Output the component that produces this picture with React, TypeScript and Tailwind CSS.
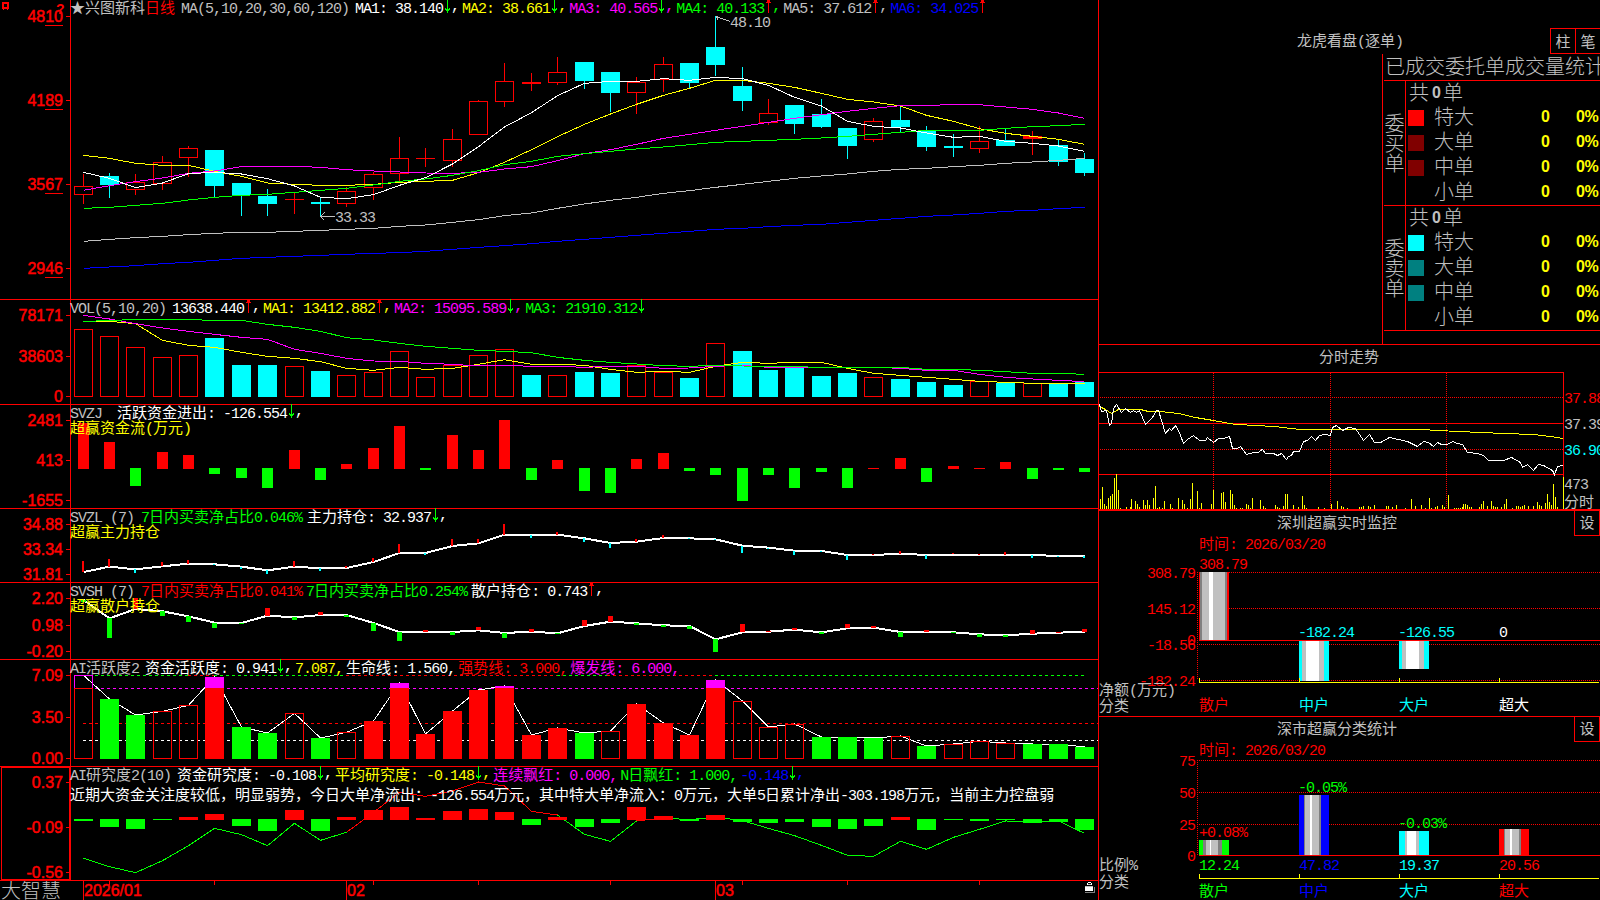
import type { ReactNode } from 'react';

const RED = '#ff0000';
const GREEN = '#00ff00';
const CYAN = '#00ffff';
const YELLOW = '#ffff00';
const MAGENTA = '#ff00ff';
const WHITE = '#ffffff';
const GRAY = '#c0c0c0';
const BLUE = '#0000ff';

const AXIS_X = 70;
const RIGHT_X = 1098;

// x of the middle pixel of every day
const days = [
  83, 109, 135, 162, 188, 214, 241, 267, 294, 320, 346, 373, 399, 425, 452, 478, 504, 531, 557, 584,
  610, 636, 663, 689, 715, 742, 768, 794, 821, 847, 873, 900, 926, 953, 979, 1005, 1032, 1058, 1084,
];
const dayX = (i: number) => days[i];

// series are stored with 3 units per pixel, relative to the base of their panel
const px = (base: number, v: number) => base + v / 3;
const snap = (base: number, v: number) => Math.round(base + v / 3);

/* ---------- data ---------- */

type Candle = [high: number, top: number, bottom: number, low: number, up: 0 | 1];

const candles: Candle[] = [
  [174, 186, 195, 204, 1], [173, 176, 185, 198, 0], [174, 182, 190, 195, 1], [156, 162, 184, 190, 1],
  [146, 148, 158, 177, 1], [150, 150, 186, 197, 0], [183, 183, 195, 216, 0], [189, 196, 204, 216, 0],
  [193, 199, 200, 214, 1], [197, 202, 204, 216, 0], [187, 191, 204, 207, 1], [172, 174, 188, 200, 1],
  [137, 158, 174, 182, 1], [148, 158, 159, 167, 1], [129, 139, 161, 167, 1], [100, 101, 135, 135, 1],
  [63, 81, 102, 107, 1], [73, 82, 84, 91, 1], [57, 72, 83, 85, 1], [62, 62, 81, 89, 0],
  [72, 72, 93, 112, 0], [77, 82, 93, 114, 1], [57, 64, 80, 92, 1], [63, 63, 83, 88, 0],
  [16, 47, 65, 76, 0], [67, 86, 101, 111, 0], [99, 113, 123, 125, 1], [105, 105, 124, 134, 0],
  [99, 114, 127, 128, 0], [128, 128, 146, 159, 0], [118, 121, 140, 142, 1], [106, 120, 127, 132, 0],
  [126, 131, 147, 151, 0], [134, 146, 148, 157, 0], [126, 141, 149, 153, 1], [128, 140, 146, 146, 0],
  [131, 136, 139, 155, 1], [140, 145, 162, 166, 0], [153, 159, 173, 176, 0],
];

const ma5 = [517, 535, 563, 549, 521, 517, 522, 536, 558, 592, 596, 584, 556, 533, 492, 440, 381, 338, 287, 250, 244, 244, 236, 241, 232, 236, 256, 292, 318, 364, 379, 384, 399, 412, 409, 424, 430, 438, 454];
const ma10 = [466, 475, 490, 496, 496, 514, 529, 549, 553, 556, 556, 553, 547, 544, 541, 518, 487, 449, 410, 373, 342, 313, 286, 265, 241, 241, 250, 262, 280, 298, 306, 318, 346, 364, 386, 400, 409, 418, 433];
const ma20 = [571, 557, 545, 534, 520, 513, 500, 499, 499, 502, 509, 513, 516, 519, 520, 517, 507, 500, 482, 461, 449, 433, 415, 403, 391, 379, 367, 355, 344, 334, 325, 317, 316, 314, 314, 321, 328, 339, 355];
const ma30 = [625, 622, 616, 610, 600, 592, 586, 583, 577, 571, 565, 555, 544, 537, 526, 512, 494, 484, 469, 461, 454, 447, 441, 434, 427, 424, 421, 418, 414, 409, 403, 397, 391, 391, 391, 385, 380, 377, 373];
const ma60 = [724, 718, 713, 709, 704, 700, 697, 697, 694, 691, 688, 685, 679, 675, 667, 659, 647, 639, 625, 612, 601, 592, 580, 572, 562, 553, 544, 535, 528, 522, 514, 508, 505, 500, 496, 490, 486, 481, 475];
const ma120 = [805, 801, 797, 791, 787, 781, 775, 772, 769, 766, 763, 760, 758, 754, 748, 742, 737, 731, 724, 718, 712, 706, 700, 694, 688, 685, 680, 676, 673, 667, 661, 655, 649, 645, 640, 634, 631, 626, 622];

const volume = [103, 124, 156, 187, 180, 129, 210, 210, 213, 228, 240, 232, 168, 247, 210, 180, 162, 240, 240, 231, 234, 210, 230, 249, 144, 168, 225, 219, 243, 234, 246, 252, 261, 270, 259, 264, 265, 265, 261];
// days whose volume bar is filled
const volumeDown = [5, 6, 7, 9, 17, 19, 20, 23, 25, 26, 27, 28, 29, 31, 32, 33, 35, 37, 38];
const volMa1 = [79, 79, 86, 136, 151, 157, 172, 184, 190, 200, 220, 226, 217, 223, 220, 208, 194, 208, 208, 211, 223, 232, 229, 232, 214, 202, 205, 202, 202, 220, 235, 241, 247, 253, 259, 262, 265, 265, 265];
const volMa2 = [61, 72, 86, 99, 109, 118, 127, 133, 163, 175, 190, 198, 199, 205, 208, 213, 211, 214, 214, 217, 214, 214, 220, 219, 214, 211, 217, 217, 217, 217, 217, 220, 226, 226, 238, 247, 252, 256, 260];
const volMa3 = [79, 77, 73, 73, 74, 76, 76, 88, 97, 109, 128, 135, 145, 154, 160, 166, 169, 173, 187, 196, 202, 207, 212, 214, 211, 213, 214, 215, 217, 217, 217, 217, 223, 223, 226, 230, 235, 235, 238];

const moneyFlow = [384, 441, 573, 471, 480, 537, 549, 579, 465, 555, 507, 459, 393, 525, 420, 465, 375, 555, 495, 588, 594, 492, 474, 528, 540, 618, 540, 579, 531, 579, 518, 489, 561, 513, 518, 501, 552, 525, 531];

const mainHold = [831, 815, 823, 814, 806, 808, 815, 826, 815, 820, 819, 801, 774, 774, 753, 745, 719, 719, 719, 730, 744, 740, 729, 730, 733, 752, 758, 767, 768, 780, 780, 776, 780, 779, 779, 779, 780, 783, 783];
const mainTip = [798, 792, 836, 801, 795, 811, 821, 839, 798, 830, 814, 789, 747, 779, 732, 732, 687, 728, 711, 743, 758, 731, 720, 734, 737, 773, 761, 779, 772, 794, 777, 768, 791, 775, 776, 771, 788, 786, 788];

const retailHold = [60, 115, 87, 94, 109, 128, 129, 107, 112, 105, 105, 129, 156, 156, 156, 151, 159, 155, 160, 138, 125, 130, 136, 138, 178, 157, 155, 149, 157, 145, 143, 156, 156, 157, 163, 166, 161, 158, 155];
const retailTip = [66, 174, 54, 108, 126, 144, 132, 84, 120, 96, 111, 153, 183, 150, 165, 141, 174, 147, 164, 120, 108, 137, 143, 146, 216, 132, 152, 144, 164, 132, 138, 171, 150, 161, 171, 171, 150, 155, 147];

const activity = [286, 357, 405, 394, 376, 291, 441, 459, 400, 474, 457, 423, 309, 462, 393, 330, 318, 465, 444, 459, 453, 372, 429, 465, 300, 363, 441, 432, 471, 471, 474, 468, 498, 492, 484, 489, 492, 492, 501];
// h: hollow, g: green, r: red
const activityKind = 'hgghhrgghghrrrrrrrrghrrrrhhhggghghhhggg';

const research = [723, 741, 747, 720, 711, 702, 738, 753, 690, 753, 711, 690, 681, 714, 693, 687, 696, 735, 711, 741, 729, 681, 708, 723, 705, 726, 729, 726, 741, 747, 738, 711, 750, 720, 723, 720, 729, 726, 750];
const researchLine = [835, 860, 878, 842, 797, 745, 764, 797, 730, 781, 757, 697, 637, 649, 633, 606, 618, 694, 705, 763, 784, 723, 714, 719, 711, 722, 745, 767, 796, 826, 829, 784, 808, 772, 748, 723, 724, 723, 760];

const intraday = '1099,404 1101,411 1106,410 1109,425 1111,423 1113,408 1116,404 1121,412 1125,408 1130,412 1133,410 1136,412 1139,410 1145,424 1152,417 1156,410 1158,410 1165,433 1169,428 1171,430 1175,425 1179,432 1183,443 1187,439 1193,435 1199,440 1205,440 1207,437 1213,442 1218,438 1223,438 1229,436 1232,448 1237,448 1240,446 1246,454 1253,452 1258,452 1260,450 1262,449 1265,453 1273,453 1277,455 1281,453 1286,459 1288,456 1291,455 1293,451 1299,451 1303,441 1307,440 1311,436 1315,440 1319,435 1325,434 1330,435 1332,427 1336,425 1342,430 1348,427 1355,428 1363,440 1369,434 1374,442 1380,442 1389,437 1398,439 1407,441 1417,446 1423,441 1428,442 1433,446 1437,442 1441,444 1447,444 1452,441 1457,443 1462,444 1467,452 1477,453 1483,455 1488,460 1503,460 1511,457 1520,462 1522,467 1527,464 1533,470 1538,464 1543,465 1552,470 1554,474 1557,466 1563,465';
const intradayAvg = '1099,406 1105,409 1111,413 1118,409 1140,409 1148,411 1160,411 1178,413 1195,417 1213,420 1235,424 1258,425 1285,427 1288,428 1303,429 1420,429 1457,431 1482,432 1503,433 1533,434 1550,436 1563,438';

// [x, height]
const intradayVol: [number, number][] = [
  [1100, 10], [1102, 22], [1104, 5], [1106, 3], [1108, 11], [1110, 13], [1112, 15], [1114, 31], [1116, 35], [1118, 19],
  [1120, 1], [1126, 2], [1130, 2], [1131, 10], [1135, 8], [1137, 5], [1139, 2], [1143, 9], [1145, 4], [1147, 9], [1149, 4],
  [1153, 11], [1155, 23], [1157, 1], [1159, 2], [1162, 1], [1164, 8], [1170, 5], [1172, 1], [1178, 11], [1182, 9], [1184, 5],
  [1187, 1], [1190, 10], [1192, 26], [1197, 18], [1199, 1], [1201, 6], [1211, 5], [1213, 19], [1221, 16], [1223, 17], [1225, 7],
  [1230, 19], [1232, 15], [1234, 4], [1236, 1], [1240, 1], [1242, 1], [1246, 5], [1248, 4], [1250, 1], [1252, 11], [1260, 9],
  [1263, 3], [1265, 1], [1275, 4], [1277, 2], [1279, 1], [1283, 3], [1285, 15], [1287, 15], [1293, 4], [1298, 2], [1302, 13],
  [1304, 4], [1306, 1], [1318, 2], [1324, 1], [1331, 5], [1337, 8], [1341, 3], [1343, 2], [1347, 1], [1359, 2], [1361, 2],
  [1363, 3], [1368, 3], [1370, 2], [1374, 4], [1386, 3], [1388, 3], [1392, 2], [1396, 4], [1405, 1], [1411, 10], [1415, 3],
  [1421, 4], [1425, 1], [1429, 11], [1431, 1], [1435, 2], [1437, 3], [1442, 4], [1444, 2], [1448, 14], [1454, 1], [1456, 1],
  [1458, 1], [1460, 1], [1462, 2], [1463, 5], [1465, 5], [1467, 4], [1469, 2], [1471, 2], [1479, 2], [1481, 5], [1483, 8],
  [1487, 3], [1491, 8], [1493, 3], [1495, 2], [1497, 2], [1501, 2], [1504, 5], [1506, 10], [1512, 1], [1516, 3], [1518, 3],
  [1520, 2], [1522, 3], [1524, 4], [1528, 3], [1533, 3], [1537, 7], [1539, 4], [1541, 3], [1545, 6], [1547, 15], [1549, 7],
  [1551, 4], [1553, 25], [1555, 12], [1557, 2], [1563, 32],
];

/* ---------- text ---------- */

// latin characters take 8px each and ideographs 15px
function Label({ children }: { children: string }) {
  const runs = children.match(/[\u2600-\uffef]+|[^\u2600-\uffef]+/g) ?? [];
  return (
    <>
      {runs.map((run, i) =>
        /[\u2600-\uffef]/.test(run) ? (
          <span key={i} className="font-['Noto_Sans_CJK_SC',sans-serif] text-[15px]">{run}</span>
        ) : (
          <span key={i} className="font-['Liberation_Mono','Noto_Sans_CJK_SC',monospace] text-[15px] tracking-[-1px]">{run}</span>
        )
      )}
    </>
  );
}

function ChartText({ x, y, fill, end, children }: { x: number; y: number; fill: string; end?: boolean; children: string }) {
  const runs = children.match(/[\u4e00-\u9fff]+|[^\u4e00-\u9fff]+/g) ?? [];
  return (
    <text x={x} y={y} fill={fill} textAnchor={end ? 'end' : 'start'}>
      {runs.map((run, i) =>
        /[\u4e00-\u9fff]/.test(run) ? (
          <tspan key={i} className="font-['Noto_Sans_CJK_SC',sans-serif] text-[15px]">{run}</tspan>
        ) : (
          <tspan key={i} className="font-['Liberation_Mono',monospace] text-[15px] tracking-[-1px]">{run}</tspan>
        )
      )}
    </text>
  );
}

function Arrow({ up }: { up?: boolean }) {
  return (
    <svg width="8" height="16" viewBox="0 0 8 16" shapeRendering="crispEdges" fill={up ? RED : GREEN} className="shrink-0">
      <rect x="4" y="0" width="1" height="14" />
      {up ? (
        <path d="M3 1h3v2h1v1h-5v-1h1z" />
      ) : (
        <path d="M2 9h1v1h3v-1h1v2h-1v1h-3v-1h-1z" />
      )}
    </svg>
  );
}

interface HeadItem {
  text: string;
  color: string;
  arrow?: 'up' | 'down';
  last?: boolean;
}

function Head({ name, items, gap = 'ml-[6px]', itemGap = 'gap-[3px]' }: { name: ReactNode; items: HeadItem[]; gap?: string; itemGap?: string }) {
  return (
    <div className="flex h-[16px] items-center whitespace-pre leading-[16px] text-[#c0c0c0]">
      <span>{name}</span>
      <div className={`flex ${itemGap} ${gap}`}>
        {items.map((item) => (
          <span key={item.text} className="flex" style={{ color: item.color }}>
            <span><Label>{item.text}</Label></span>
            {item.arrow && <Arrow up={item.arrow === 'up'} />}
            {item.arrow && !item.last && <Label>,</Label>}
          </span>
        ))}
      </div>
    </div>
  );
}

/* ---------- chart parts ---------- */

function DayLine({ base, values, color, width = 1, from = 0 }: { base: number; values: number[]; color: string; width?: number; from?: number }) {
  const points = values.map((v, i) => `${dayX(i + from) + 0.5},${px(base, v)}`).join(' ');
  return <polyline points={points} fill="none" stroke={color} strokeWidth={width} />;
}

function Hollow({ x, y, bottom, color = RED, fill = 'none' }: { x: number; y: number; bottom: number; color?: string; fill?: string }) {
  return <rect x={x - 8.5} y={y + 0.5} width={18} height={Math.max(bottom - y - 1, 0.01)} fill={fill} stroke={color} />;
}

function AxisLabels({ labels, underline }: { labels: [string, number][]; underline?: boolean }) {
  return (
    <>
      {labels.map(([text, y]) => (
        <g key={text}>
          <text x="63" y={y + 6} fill={RED} textAnchor="end" className="font-['Liberation_Sans',sans-serif] text-[16px]" stroke={RED} strokeWidth="0.5">{text}</text>
          <rect x="66" y={y} width="4" height="1" fill={RED} />
          {underline && <rect x="45" y={y + 9} width="18" height="1" fill={RED} />}
        </g>
      ))}
    </>
  );
}

// a row of the left column; the drawing uses page coordinates
function Panel({ y, heightClass, drawing, children }: { y: [number, number]; heightClass: string; drawing: ReactNode; children?: ReactNode }) {
  const [top, bottom] = y;
  return (
    <section className={`relative w-[1099px] shrink-0 border-b border-[#ff0000] ${heightClass}`}>
      <svg className="absolute left-0 top-0" width="1099" height={bottom - top} viewBox={`0 ${top} 1099 ${bottom - top}`} shapeRendering="crispEdges">
        <rect x={AXIS_X} y={top} width="1" height={bottom - top} fill={RED} />
        {drawing}
      </svg>
      <div className="relative pl-[70px]">{children}</div>
    </section>
  );
}

/* ---------- left column ---------- */

function PricePanel() {
  return (
    <Panel
      y={[0, 299]}
      heightClass="h-[300px]"
      drawing={
        <>
          <path d="M2 2h7v7h-1v1h-1v-1h-3v1h-1v-1h-1zM4 4v3h3v-3z" fill={RED} fillRule="evenodd" />
          <text x="56" y="14" fill={RED} className="font-['Liberation_Sans',sans-serif] text-[14px] font-bold">?</text>
          <AxisLabels underline labels={[['4810', 16], ['4189', 100], ['3567', 184], ['2946', 268]]} />
          {candles.map(([high, top, bottom, low, up], i) => {
            const x = dayX(i);
            return (
              <g key={i}>
                <rect x={x} y={high} width="1" height={low - high} fill={up ? RED : CYAN} />
                {up && bottom - top > 3 ? (
                  <Hollow x={x} y={top} bottom={bottom} fill="#000" />
                ) : (
                  <rect x={x - 9} y={top} width="19" height={bottom - top} fill={up ? RED : CYAN} />
                )}
              </g>
            );
          })}
          <DayLine base={0} values={ma120} color={BLUE} />
          <DayLine base={0} values={ma60} color={GRAY} />
          <DayLine base={0} values={ma10} color={YELLOW} />
          <DayLine base={0} values={ma20} color={MAGENTA} />
          <DayLine base={0} values={ma30} color={GREEN} />
          <DayLine base={0} values={ma5} color={WHITE} />
          <path d="M335 216.5H320.5M324.5 212.5L320.5 216.5L324.5 220.5" fill="none" stroke={GRAY} />
          <ChartText x={335} y={222} fill={GRAY}>33.33</ChartText>
          <path d="M716 16.5L730 21.5M716 16.5L718.5 20.5" fill="none" stroke={GRAY} />
          <ChartText x={730} y={27} fill={GRAY}>48.10</ChartText>
        </>
      }
    >
      <Head
        name={<><Label>★兴图新科</Label><span className="text-[#ff0000]"><Label>日线</Label></span><span className="ml-[6px]"><Label>MA(5,10,20,30,60,120)</Label></span></>}
        items={[
          { text: 'MA1: 38.140', color: WHITE, arrow: 'down' },
          { text: 'MA2: 38.661', color: YELLOW, arrow: 'down' },
          { text: 'MA3: 40.565', color: MAGENTA, arrow: 'down' },
          { text: 'MA4: 40.133', color: GREEN, arrow: 'up' },
          { text: 'MA5: 37.612', color: GRAY, arrow: 'up' },
          { text: 'MA6: 34.025', color: BLUE, arrow: 'up', last: true },
        ]}
      />
    </Panel>
  );
}

function VolumePanel() {
  return (
    <Panel
      y={[300, 404]}
      heightClass="h-[105px]"
      drawing={
        <>
          <AxisLabels labels={[['78171', 315], ['38603', 356], ['0', 396]]} />
          {volume.map((v, i) =>
            volumeDown.includes(i) ? (
              <rect key={i} x={dayX(i) - 9} y={snap(295, v)} width="19" height={397 - snap(295, v)} fill={CYAN} />
            ) : (
              <Hollow key={i} x={dayX(i)} y={snap(295, v)} bottom={397} />
            )
          )}
          <DayLine base={295} values={volMa1} color={YELLOW} />
          <DayLine base={295} values={volMa2} color={MAGENTA} />
          <DayLine base={295} values={volMa3} color={GREEN} />
        </>
      }
    >
      <Head
        name={<Label>VOL(5,10,20)</Label>}
        items={[
          { text: '13638.440', color: WHITE, arrow: 'up' },
          { text: 'MA1: 13412.882', color: YELLOW, arrow: 'up' },
          { text: 'MA2: 15095.589', color: MAGENTA, arrow: 'down' },
          { text: 'MA3: 21910.312', color: GREEN, arrow: 'down', last: true },
        ]}
      />
    </Panel>
  );
}

function FlowPanel() {
  return (
    <Panel
      y={[405, 508]}
      heightClass="h-[104px]"
      drawing={
        <>
          <AxisLabels labels={[['2481', 420], ['413', 460], ['-1655', 500]]} />
          {moneyFlow.map((v, i) => {
            const y = snap(295, v);
            return v < 520 ? (
              <rect key={i} x={dayX(i) - 5} y={y} width="11" height={469 - y} fill={RED} />
            ) : (
              <rect key={i} x={dayX(i) - 5} y={468} width="11" height={y - 468} fill={GREEN} />
            );
          })}
        </>
      }
    >
      <Head
        name={<Label>SVZJ</Label>}
        gap="ml-[15px]"
        items={[{ text: '活跃资金进出: -126.554', color: WHITE, arrow: 'down' }]}
      />
      <div className="-mt-[2px] h-[16px] leading-[16px] text-[#ffff00]"><Label>超赢资金流(万元)</Label></div>
    </Panel>
  );
}

function MainHoldPanel() {
  return (
    <Panel
      y={[509, 582]}
      heightClass="h-[74px]"
      drawing={
        <>
          <AxisLabels labels={[['34.88', 524], ['33.34', 549], ['31.81', 574]]} />
          <DayLine base={295} values={mainHold} color={WHITE} width={2} />
          {mainTip.map((v, i) => {
            const a = px(295, v);
            const b = px(295, mainHold[i]);
            return <rect key={i} x={dayX(i) - 1} y={Math.round(Math.min(a, b))} width="2" height={Math.max(Math.round(Math.abs(a - b)), 1)} fill={a < b ? RED : CYAN} />;
          })}
        </>
      }
    >
      <Head
        name={<Label>SVZL (7)</Label>}
        gap="ml-[7px]"
        itemGap="gap-[5px]"
        items={[
          { text: '7日内买卖净占比0.046%', color: GREEN },
          { text: '主力持仓: 32.937', color: WHITE, arrow: 'down' },
        ]}
      />
      <div className="-mt-[2px] h-[16px] leading-[16px] text-[#ffff00]"><Label>超赢主力持仓</Label></div>
    </Panel>
  );
}

function RetailHoldPanel() {
  return (
    <Panel
      y={[583, 659]}
      heightClass="h-[77px]"
      drawing={
        <>
          <AxisLabels labels={[['2.20', 598], ['0.98', 625], ['-0.20', 651]]} />
          <DayLine base={580} values={retailHold} color={WHITE} width={2} />
          {retailTip.map((v, i) => {
            const a = px(580, v);
            const b = px(580, retailHold[i]);
            return <rect key={i} x={dayX(i) - 2} y={Math.round(Math.min(a, b))} width="5" height={Math.max(Math.round(Math.abs(a - b)), 1)} fill={a < b ? RED : GREEN} />;
          })}
        </>
      }
    >
      <Head
        name={<Label>SVSH (7)</Label>}
        gap="ml-[7px]"
        itemGap="gap-[4px]"
        items={[
          { text: '7日内买卖净占比0.041%', color: RED },
          { text: '7日内买卖净占比0.254%', color: GREEN },
          { text: '散户持仓: 0.743', color: WHITE, arrow: 'up' },
        ]}
      />
      <div className="-mt-[2px] h-[16px] leading-[16px] text-[#ffff00]"><Label>超赢散户持仓</Label></div>
    </Panel>
  );
}

function ActivityPanel() {
  return (
    <Panel
      y={[660, 766]}
      heightClass="h-[107px]"
      drawing={
        <>
          <AxisLabels labels={[['7.09', 675], ['3.50', 717], ['0.00', 758]]} />
          <g fill="none" strokeDasharray="3 3">
            <path d="M83 675.5H188M214 675.5H346M557 675.5H607M715 675.5H1084" stroke={GREEN} />
            <path d="M188 675.5H214M346 675.5H557M607 675.5H715" stroke={RED} />
            <path d="M83 688.5H1098" stroke={MAGENTA} />
            <path d="M83 723.5H1098" stroke={RED} />
            <path d="M83 740.5H1098" stroke={WHITE} />
          </g>
          <DayLine base={580} values={activity} color={WHITE} />
          {activity.map((v, i) => {
            const x = dayX(i);
            const y = snap(580, v);
            const kind = activityKind[i];
            const cut = 688;
            if (kind === 'h') {
              return (
                <g key={i}>
                  <Hollow x={x} y={Math.max(y, cut)} bottom={759} />
                  {y < cut && <Hollow x={x} y={y} bottom={cut + 1} color={MAGENTA} />}
                  {y < cut && <rect x={x - 9} y={cut} width="19" height="1" fill={RED} />}
                </g>
              );
            }
            return (
              <g key={i}>
                <rect x={x - 9} y={y} width="19" height={759 - y} fill={kind === 'g' ? GREEN : RED} />
                {y < cut && <rect x={x - 9} y={y} width="19" height={cut - y} fill={MAGENTA} />}
              </g>
            );
          })}
        </>
      }
    >
      <Head
        name={<Label>AI活跃度2</Label>}
        items={[
          { text: '资金活跃度: 0.941', color: WHITE, arrow: 'down' },
          { text: '7.087,', color: YELLOW },
          { text: '生命线: 1.560,', color: WHITE },
          { text: '强势线: 3.000,', color: RED },
          { text: '爆发线: 6.000,', color: MAGENTA },
        ]}
      />
    </Panel>
  );
}

function ResearchPanel() {
  return (
    <Panel
      y={[767, 880]}
      heightClass="h-[114px]"
      drawing={
        <>
          <rect x="1.5" y="767.5" width="68" height="112" fill="none" stroke={RED} />
          <AxisLabels labels={[['0.37', 782], ['-0.09', 827], ['-0.56', 872]]} />
          <DayLine base={580} values={researchLine} color={GREEN} />
          <DayLine base={580} values={researchLine.slice(10, 19)} color={RED} from={10} />
          <DayLine base={580} values={researchLine.slice(21, 23)} color={RED} from={21} />
          {research.map((v, i) => {
            const y = snap(580, v);
            return v < 718 ? (
              <rect key={i} x={dayX(i) - 9} y={y} width="19" height={820 - y} fill={RED} />
            ) : (
              <rect key={i} x={dayX(i) - 9} y={819} width="19" height={y - 819} fill={GREEN} />
            );
          })}
        </>
      }
    >
      <Head
        name={<Label>AI研究度2(10)</Label>}
        items={[
          { text: '资金研究度: -0.108', color: WHITE, arrow: 'down' },
          { text: '平均研究度: -0.148', color: YELLOW, arrow: 'down' },
          { text: '连续飘红: 0.000,', color: MAGENTA },
          { text: 'N日飘红: 1.000,', color: GREEN },
          { text: '-0.148', color: BLUE, arrow: 'down' },
        ]}
      />
      <div className="mt-[3px] h-[16px] whitespace-nowrap leading-[16px] text-white">
        <Label>近期大资金关注度较低，明显弱势，今日大单净流出：-126.554万元，其中特大单净流入：0万元，大单5日累计净出-303.198万元，当前主力控盘弱</Label>
      </div>
    </Panel>
  );
}

function DateAxis() {
  return (
    <div className="flex h-[19px] w-[1099px] shrink-0">
      <div className="w-[71px] pl-[1px] font-['Noto_Sans_CJK_SC',sans-serif] text-[20px] font-light leading-[17px] text-[#c0c0c0]">大智慧</div>
      <svg width="1028" height="19" viewBox="71 881 1028 19" shapeRendering="crispEdges">
        {[83, 346, 715].map((x) => <rect key={x} x={x} y="881" width="1" height="19" fill={RED} />)}
        {[109, 214, 373, 478, 610, 742, 847, 979].map((x) => <rect key={x} x={x} y="881" width="1" height="4" fill={RED} />)}
        <g fill={RED} stroke={RED} strokeWidth="0.5" className="font-['Liberation_Sans',sans-serif] text-[16px]">
          <text x="84" y="896">2026/01</text>
          <text x="347" y="896">02</text>
          <text x="716" y="896">03</text>
        </g>
        {/* lock */}
        <path d="M1087 885v-2h1v-1h3v1h1v2h-1v-2h-3v2z" fill={WHITE} />
        <rect x="1085" y="886" width="8" height="5" fill={WHITE} />
        <path d="M1085 886h8v1h-8zM1088 884h3v1h-3z" fill={GRAY} />
        <path d="M1094 887h1v6h-10v-1h9z" fill="#808080" />
      </svg>
    </div>
  );
}

/* ---------- right column ---------- */

function OrderGroup({ side, colors }: { side: string; colors: string[] }) {
  return (
    <div className="flex h-[125px] border-b border-[#ff0000]">
      <div className="flex w-[22px] flex-col items-center justify-center border-r border-[#ff0000] leading-[20px]">
        {side.split('').map((c) => <span key={c}>{c}</span>)}
      </div>
      <div className="w-[194px]">
        <div className="flex h-[24px] items-center gap-[3px] pl-[3px] leading-[22px]">
          <span className="-mt-[2px]">共</span>
          <b className="font-['Liberation_Sans',sans-serif] text-[16px] font-bold">0</b>
          <span className="-ml-px -mt-[2px]">单</span>
        </div>
        {['特大', '大单', '中单', '小单'].map((name, i) => (
          <div key={name} className="flex h-[25px] items-center leading-[25px]">
            <i className="ml-[2px] size-[16px]" style={{ backgroundColor: colors[i] }} />
            <span className="-mt-[4px] ml-[10px] w-[107px]">{name}</span>
            <b className="-mt-[2px] w-[35px] font-['Liberation_Sans',sans-serif] text-[16px] font-bold text-[#ffff00]">0</b>
            <b className="-mt-[2px] font-['Liberation_Sans',sans-serif] text-[16px] font-bold tracking-[-0.5px] text-[#ffff00]">0%</b>
          </div>
        ))}
      </div>
    </div>
  );
}

function OrderBook() {
  return (
    <section className="flex h-[345px] flex-col border-b border-[#ff0000] text-[#c0c0c0]">
      <div className="flex h-[54px] justify-between pt-7">
        <div className="ml-[198px] pt-[2px] leading-[20px]"><Label>龙虎看盘(逐单)</Label></div>
        <div className="flex h-[26px] w-[50px] border-y border-l border-[#ff0000]">
          <div className="flex w-6 items-center justify-center pb-[2px] leading-none"><Label>柱</Label></div>
          <div className="flex w-[25px] items-center justify-center border-l border-[#ff0000] pb-[2px] leading-none"><Label>笔</Label></div>
        </div>
      </div>
      <div className="ml-[283px] h-[290px] border-l border-[#ff0000] pl-px font-['Noto_Sans_CJK_SC',sans-serif] text-[20px] font-light">
        <div className="h-[27px] whitespace-nowrap border-b border-[#ff0000] pl-px leading-[23px]">已成交委托单成交量统计</div>
        <OrderGroup side="委买单" colors={[RED, '#800000', '#800000', 'transparent']} />
        <OrderGroup side="委卖单" colors={[CYAN, '#008080', '#008080', 'transparent']} />
      </div>
    </section>
  );
}

function Intraday() {
  return (
    <section className="h-[166px] border-b border-[#ff0000] text-[#c0c0c0]">
      <div className="h-[27px] pt-px pl-[220px] leading-[20px]"><Label>分时走势</Label></div>
      <svg width="501" height="138" viewBox="1099 372 501 138" shapeRendering="crispEdges">
        <g fill="none" stroke={RED}>
          <path d="M1099 372.5H1563.5V509M1099 423.5H1563M1099 474.5H1563M1099 509.5H1600" />
          <path d="M1100 397.5H1563M1100 449.5H1563M1213.5 373V509M1330.5 373V509M1446.5 373V509" strokeDasharray="1 1" />
        </g>
        {intradayVol.map(([x, h]) => <rect key={x} x={x} y={509 - h} width="1" height={h} fill={YELLOW} />)}
        <polyline points={intradayAvg} fill="none" stroke={YELLOW} transform="translate(0.5 0.5)" />
        <polyline points={intraday} fill="none" stroke={WHITE} transform="translate(0.5 0.5)" />
        <ChartText x={1564} y={403} fill={RED}>37.88</ChartText>
        <ChartText x={1564} y={429} fill={GRAY}>37.39</ChartText>
        <ChartText x={1564} y={455} fill={CYAN}>36.90</ChartText>
        <ChartText x={1564} y={489} fill={GRAY}>473</ChartText>
        <ChartText x={1564} y={507} fill={GRAY}>分时</ChartText>
      </svg>
    </section>
  );
}

type Band = [width: number, color: string];

const DARK = '#808080';

// shaded column, bands from left to right
function Cylinder({ x, y, height, bands }: { x: number; y: number; height: number; bands: Band[] }) {
  let left = x;
  return (
    <>
      {bands.map(([w, color], i) => {
        const at = left;
        left += w;
        return <rect key={i} x={at} y={y} width={w} height={height} fill={color} />;
      })}
    </>
  );
}

function StatHeader({ title }: { title: string }) {
  return (
    <div className="flex h-[25px] justify-between">
      <div className="ml-[178px] pt-px leading-[20px]"><Label>{title}</Label></div>
      <div className="flex w-[26px] items-center justify-center border-x border-b border-[#ff0000] pb-[3px] leading-none"><Label>设</Label></div>
    </div>
  );
}

function NetPanel() {
  return (
    <section className="h-[206px] border-b border-[#ff0000] text-[#c0c0c0]">
      <StatHeader title="深圳超赢实时监控" />
      <svg width="501" height="180" viewBox="1099 536 501 180" shapeRendering="crispEdges">
        <path d="M1199 572.5H1600M1199 608.5H1600M1199 644.5H1600M1199 680.5H1600M1197.5 572V680" stroke={RED} strokeDasharray="1 1" />
        <Cylinder x={1199} y={572} height={68} bands={[[1, RED], [2, DARK], [7, GRAY], [4, WHITE], [12, GRAY], [2, DARK], [2, RED]]} />
        <Cylinder x={1299} y={641} height={40} bands={[[3, CYAN], [4, GRAY], [13, WHITE], [5, GRAY], [5, CYAN]]} />
        <Cylinder x={1399} y={641} height={28} bands={[[3, CYAN], [4, GRAY], [13, WHITE], [5, GRAY], [5, CYAN]]} />
        <rect x="1199" y="640" width="401" height="1" fill={RED} />
        <path d="M1199.5 678V682.5H1599M1299.5 678V682M1399.5 678V682M1499.5 678V682" fill="none" stroke={YELLOW} />
        <ChartText x={1199} y={549} fill={RED}>时间: 2026/03/20</ChartText>
        <ChartText x={1199} y={569} fill={RED}>308.79</ChartText>
        <ChartText end x={1195} y={578} fill={RED}>308.79</ChartText>
        <ChartText end x={1195} y={614} fill={RED}>145.12</ChartText>
        <ChartText end x={1195} y={645} fill={RED}>0</ChartText>
        <ChartText end x={1195} y={650} fill={RED}>-18.56</ChartText>
        <ChartText end x={1195} y={686} fill={RED}>-182.24</ChartText>
        <ChartText x={1298} y={637} fill={CYAN}>-182.24</ChartText>
        <ChartText x={1398} y={637} fill={CYAN}>-126.55</ChartText>
        <ChartText x={1499} y={637} fill={WHITE}>0</ChartText>
        <ChartText x={1099} y={695} fill={GRAY}>净额(万元)</ChartText>
        <ChartText x={1099} y={711} fill={GRAY}>分类</ChartText>
        <ChartText x={1199} y={710} fill={RED}>散户</ChartText>
        <ChartText x={1299} y={710} fill={CYAN}>中户</ChartText>
        <ChartText x={1399} y={710} fill={CYAN}>大户</ChartText>
        <ChartText x={1499} y={710} fill={WHITE}>超大</ChartText>
      </svg>
    </section>
  );
}

function RatioPanel() {
  return (
    <section className="h-[183px] text-[#c0c0c0]">
      <StatHeader title="深市超赢分类统计" />
      <svg width="501" height="158" viewBox="1099 742 501 158" shapeRendering="crispEdges">
        <path d="M1199 760.5H1600M1199 792.5H1600M1199 824.5H1600M1197.5 760V855" stroke={RED} strokeDasharray="1 1" />
        <Cylinder x={1199} y={840} height={15} bands={[[4, GREEN], [3, DARK], [4, GRAY], [1, WHITE], [7, GRAY], [4, DARK], [7, GREEN]]} />
        <Cylinder x={1299} y={795} height={60} bands={[[5, BLUE], [1, DARK], [5, GRAY], [2, WHITE], [7, GRAY], [2, DARK], [8, BLUE]]} />
        <Cylinder x={1399} y={831} height={24} bands={[[6, CYAN], [2, GRAY], [9, WHITE], [3, GRAY], [10, CYAN]]} />
        <Cylinder x={1499} y={829} height={26} bands={[[5, RED], [1, DARK], [5, GRAY], [2, WHITE], [7, GRAY], [2, DARK], [8, RED]]} />
        <rect x="1199" y="855" width="401" height="1" fill={RED} />
        <path d="M1199.5 874V878.5H1599M1299.5 874V878M1399.5 874V878M1499.5 874V878" fill="none" stroke={YELLOW} />
        <ChartText x={1199} y={755} fill={RED}>时间: 2026/03/20</ChartText>
        <ChartText end x={1195} y={766} fill={RED}>75</ChartText>
        <ChartText end x={1195} y={798} fill={RED}>50</ChartText>
        <ChartText end x={1195} y={830} fill={RED}>25</ChartText>
        <ChartText end x={1195} y={861} fill={RED}>0</ChartText>
        <ChartText x={1199} y={837} fill={RED}>+0.08%</ChartText>
        <ChartText x={1298} y={792} fill={GREEN}>-0.05%</ChartText>
        <ChartText x={1398} y={828} fill={GREEN}>-0.03%</ChartText>
        <ChartText x={1199} y={870} fill={GREEN}>12.24</ChartText>
        <ChartText x={1299} y={870} fill={BLUE}>47.82</ChartText>
        <ChartText x={1399} y={870} fill={CYAN}>19.37</ChartText>
        <ChartText x={1499} y={870} fill={RED}>20.56</ChartText>
        <ChartText x={1099} y={870} fill={GRAY}>比例%</ChartText>
        <ChartText x={1099} y={887} fill={GRAY}>分类</ChartText>
        <ChartText x={1199} y={896} fill={GREEN}>散户</ChartText>
        <ChartText x={1299} y={896} fill={BLUE}>中户</ChartText>
        <ChartText x={1399} y={896} fill={CYAN}>大户</ChartText>
        <ChartText x={1499} y={896} fill={RED}>超大</ChartText>
      </svg>
    </section>
  );
}

export default function App() {
  return (
    <div className="flex h-[900px] w-[1600px] overflow-hidden bg-black">
      <main className="flex flex-col" style={{ width: RIGHT_X }}>
        <PricePanel />
        <VolumePanel />
        <FlowPanel />
        <MainHoldPanel />
        <RetailHoldPanel />
        <ActivityPanel />
        <ResearchPanel />
        <DateAxis />
      </main>
      <aside className="relative w-[502px] shrink-0 overflow-hidden border-l border-[#ff0000] bg-black">
        <OrderBook />
        <Intraday />
        <NetPanel />
        <RatioPanel />
      </aside>
    </div>
  );
}
